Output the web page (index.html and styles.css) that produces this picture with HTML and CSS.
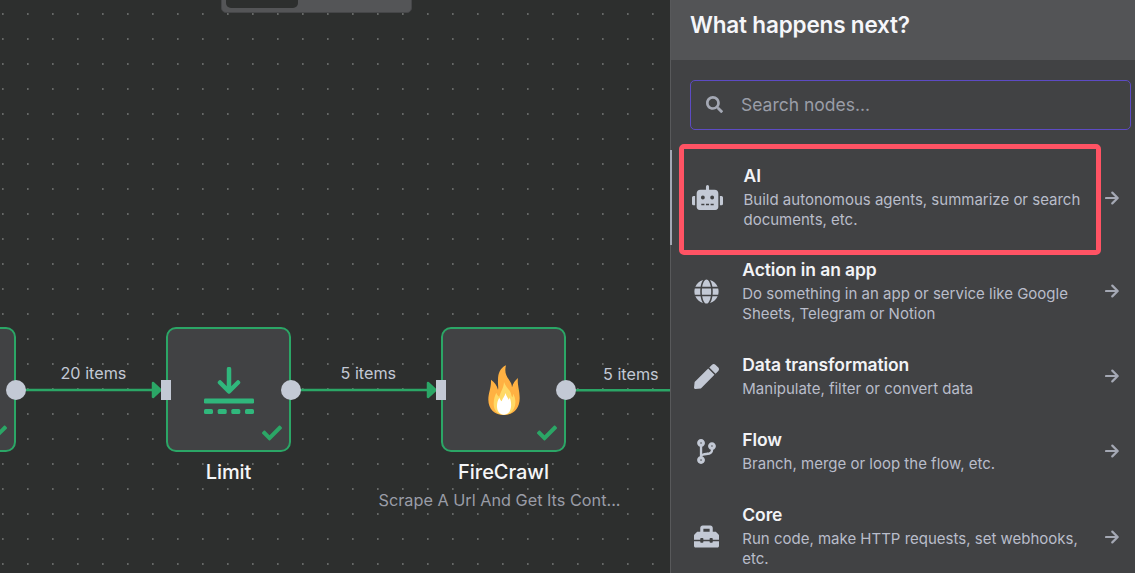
FILE: index.html
```html
<!DOCTYPE html>
<html lang="en">
<head>
<meta charset="utf-8">
<title>Workflow editor</title>
<link rel="stylesheet" href="styles.css">
</head>
<body>
<svg class="defs" aria-hidden="true">
  <symbol id="check" viewBox="0 0 512 512"><path d="M173.898 439.404l-166.4-166.4c-9.997-9.997-9.997-26.206 0-36.204l36.203-36.204c9.997-9.998 26.207-9.998 36.204 0L192 312.69 432.095 72.596c9.997-9.997 26.207-9.997 36.204 0l36.203 36.204c9.997 9.997 9.997 26.206 0 36.204l-294.4 294.401c-9.998 9.997-26.207 9.997-36.204-.001z"/></symbol>
  <symbol id="arrow" viewBox="0 0 14 14"><path d="M1 7H12.2M7.3 1.6L12.7 7L7.3 12.4" fill="none" stroke="currentColor" stroke-width="2.2" stroke-linecap="round" stroke-linejoin="round"/></symbol>
</svg>
<div class="app">
  <main class="canvas">
    <div class="tabs"><span class="tab-active"></span></div>

    <svg class="edges" width="670" height="573">
      <g class="edge">
        <path d="M16 390H155M291 390H430M566 390.3H670"/>
        <path class="head" d="M153 383L160.500 390L153 397ZM428 383L435.500 390L428 397Z"/>
      </g>
    </svg>
    <span class="edge-label label-a">20 items</span>
    <span class="edge-label label-b">5 items</span>
    <span class="edge-label label-c">5 items</span>

    <div class="node node-prev">
      <svg class="check"><use href="#check"/></svg>
      <i class="port-out"></i>
    </div>
    <div class="node node-limit">
      <svg class="limit-icon" viewBox="0 0 50 48">
        <path d="M25 2V24M16 15.500L25 24.500L34 15.500" fill="none" stroke="currentColor" stroke-width="4.500" stroke-linecap="round" stroke-linejoin="round"/>
        <rect x="0" y="31.500" width="50" height="5" rx="1.300"/>
        <rect x="0" y="42" width="9" height="5" rx="1.600"/>
        <rect x="13.700" y="42" width="9" height="5" rx="1.600"/>
        <rect x="27.300" y="42" width="9" height="5" rx="1.600"/>
        <rect x="41" y="42" width="9" height="5" rx="1.600"/>
      </svg>
      <svg class="check"><use href="#check"/></svg>
      <i class="port-in"></i><i class="port-out"></i>
    </div>
    <div class="node node-fire">
      <svg class="fire-icon" viewBox="204 150 96 150">
        <path fill="#ffb142" d="M258 151C253 170 258 182 266 193C272 202 276 209 276 217C279 205 285 196 294 189C291 208 299 224 299 250C299 280 281 300 252 300C224 300 205 282 205 254C205 232 214 220 213 194C223 201 231 211 234 224C236 216 233 209 234 195C234 174 241 159 258 151Z"/>
        <path fill="#ffd966" d="M252 201C256 216 272 225 274 240C275 244 276 246 277 247C279 244 279 240 279 236C284 244 287 254 286 264C285 285 271 299 252 299C232 299 221 285 221 266C221 252 225 241 229 233C231 239 234 243 238 245C242 229 251 220 252 201Z"/>
        <path fill="#fff" d="M257 234C258 243 263 247 266 254C268 251 269 250 269 247C273 258 274 266 273 276C271 290 264 299 252 299C239 299 231 289 231 274C231 264 233 256 238 248C240 253 242 256 245 259C248 249 254 244 257 234Z"/>
      </svg>
      <svg class="check"><use href="#check"/></svg>
      <i class="port-in"></i><i class="port-out"></i>
    </div>
    <div class="node-name name-limit">Limit</div>
    <div class="node-name name-fire">FireCrawl</div>
    <div class="node-sub">Scrape A Url And Get Its Cont...</div>
  </main>

  <aside class="panel">
    <header class="panel-header">What happens next?</header>
    <div class="search">
      <svg viewBox="0 0 512 512"><path d="M505 442.700L405.300 343c-4.500-4.500-10.600-7-17-7H372c27.600-35.300 44-79.700 44-128C416 93.100 322.900 0 208 0S0 93.100 0 208s93.100 208 208 208c48.300 0 92.700-16.400 128-44v16.300c0 6.400 2.500 12.500 7 17l99.700 99.700c9.400 9.400 24.600 9.400 33.900 0l28.300-28.300c9.400-9.400 9.400-24.600.1-34zM208 336c-70.700 0-128-57.200-128-128 0-70.700 57.200-128 128-128 70.700 0 128 57.200 128 128 0 70.700-57.200 128-128 128z"/></svg>
      <span>Search nodes...</span>
    </div>
    <section class="list">
      <div class="item selected">
        <div class="icon"><svg class="robot" viewBox="0 0 640 512"><path d="M32,224H64V416H32A32,32,0,0,1,0,384V256A32,32,0,0,1,32,224Zm512-48V448a64,64,0,0,1-64,64H160a64,64,0,0,1-64-64V176a80,80,0,0,1,80-80H288V32a32,32,0,0,1,64,0V96H464A80,80,0,0,1,544,176ZM264,256a40,40,0,1,0-40,40A40,40,0,0,0,264,256Zm-8,128H192v32h64Zm96,0H288v32h64ZM456,256a40,40,0,1,0-40,40A40,40,0,0,0,456,256Zm-8,128H384v32h64ZM640,256V384a32,32,0,0,1-32,32H576V224h32A32,32,0,0,1,640,256Z"/></svg></div>
        <div class="text"><h3>AI</h3><p>Build autonomous agents, summarize or search<br>documents, etc.</p></div>
        <svg class="arrow"><use href="#arrow"/></svg>
      </div>
      <div class="item double">
        <div class="icon"><svg viewBox="-8 0 512 512"><path d="M336.500 160C322 70.700 287.800 8 248 8s-74 62.700-88.500 152h177zM152 256c0 22.200 1.200 43.500 3.300 64h185.300c2.100-20.500 3.300-41.800 3.300-64s-1.200-43.500-3.300-64H155.300c-2.100 20.500-3.300 41.800-3.300 64zm324.700-96c-28.600-67.900-86.500-120.400-158-141.600 24.400 33.800 41.200 84.700 50 141.600h108zM177.200 18.400C105.800 39.600 47.800 92.100 19.300 160h108c8.700-56.900 25.500-107.800 49.900-141.600zM487.400 192H372.700c2.100 21 3.300 42.500 3.300 64s-1.200 43-3.300 64h114.600c5.500-20.500 8.600-41.800 8.600-64s-3.100-43.500-8.500-64zM120 256c0-21.500 1.200-43 3.300-64H8.600C3.200 212.500 0 233.800 0 256s3.200 43.500 8.600 64h114.600c-2-21-3.200-42.500-3.200-64zm39.500 96c14.500 89.300 48.700 152 88.500 152s74-62.700 88.500-152h-177zm159.300 141.600c71.400-21.200 129.400-73.700 158-141.600h-108c-8.800 56.900-25.600 107.800-50 141.600zM19.300 352c28.600 67.900 86.500 120.400 158 141.600-24.400-33.800-41.200-84.700-50-141.600h-108z"/></svg></div>
        <div class="text"><h3>Action in an app</h3><p>Do something in an app or service like Google<br>Sheets, Telegram or Notion</p></div>
        <svg class="arrow"><use href="#arrow"/></svg>
      </div>
      <div class="item">
        <div class="icon"><svg viewBox="0 0 512 512"><path d="M290.740 93.240l128.020 128.020-277.990 277.990-114.140 12.600C11.350 513.540-1.560 500.620.140 485.340l12.700-114.220 277.900-277.880zm207.200-19.060l-60.110-60.110c-18.750-18.750-49.160-18.750-67.910 0l-56.550 56.550 128.020 128.020 56.550-56.550c18.750-18.760 18.750-49.160 0-67.910z"/></svg></div>
        <div class="text"><h3>Data transformation</h3><p>Manipulate, filter or convert data</p></div>
        <svg class="arrow"><use href="#arrow"/></svg>
      </div>
      <div class="item">
        <div class="icon"><svg viewBox="-64 0 512 512"><path d="M384 144c0-44.200-35.800-80-80-80s-80 35.800-80 80c0 36.400 24.300 67.100 57.500 76.800-.6 16.100-4.200 28.500-11 36.900-15.400 19.200-49.300 22.400-85.200 25.700-28.200 2.600-57.400 5.400-81.300 16.900v-144c32.500-10.200 56-40.500 56-76.300 0-44.200-35.800-80-80-80S0 35.800 0 80c0 35.800 23.500 66.100 56 76.300v199.300C23.500 365.900 0 396.200 0 432c0 44.200 35.800 80 80 80s80-35.800 80-80c0-34-21.200-63.100-51.200-74.600 3.100-5.200 7.800-9.800 14.900-13.400 16.200-8.200 40.400-10.400 66.100-12.800 42.200-3.900 90-8.400 118.200-43.400 14-17.400 21.100-39.800 21.600-67.900 31.600-10.800 54.400-40.700 54.400-75.900zM80 64c8.800 0 16 7.200 16 16s-7.200 16-16 16-16-7.200-16-16 7.200-16 16-16zm0 384c-8.800 0-16-7.200-16-16s7.200-16 16-16 16 7.200 16 16-7.200 16-16 16zm224-320c8.800 0 16 7.200 16 16s-7.200 16-16 16-16-7.200-16-16 7.200-16 16-16z"/></svg></div>
        <div class="text"><h3>Flow</h3><p>Branch, merge or loop the flow, etc.</p></div>
        <svg class="arrow"><use href="#arrow"/></svg>
      </div>
      <div class="item double last">
        <div class="icon"><svg viewBox="0 0 512 512"><path d="M502.630 214.630l-45.250-45.250c-6-6-14.140-9.370-22.630-9.370H384V80c0-26.510-21.490-48-48-48H176c-26.510 0-48 21.490-48 48v80H77.250c-8.490 0-16.620 3.370-22.630 9.370L9.370 214.630c-6 6-9.370 14.140-9.370 22.630V320h128v-16c0-8.840 7.160-16 16-16h32c8.840 0 16 7.160 16 16v16h128v-16c0-8.840 7.160-16 16-16h32c8.840 0 16 7.160 16 16v16h128v-82.750c0-8.480-3.370-16.620-9.370-22.620zM320 160H192V96h128v64zm64 208c0 8.840-7.160 16-16 16h-32c-8.840 0-16-7.160-16-16v-16H192v16c0 8.840-7.160 16-16 16h-32c-8.840 0-16-7.160-16-16v-16H0v96c0 17.670 14.330 32 32 32h448c17.670 0 32-14.330 32-32v-96H384v16z"/></svg></div>
        <div class="text"><h3>Core</h3><p>Run code, make HTTP requests, set webhooks,<br>etc.</p></div>
        <svg class="arrow"><use href="#arrow"/></svg>
      </div>
    </section>
    <div class="highlight"></div>
  </aside>
</div>
</body>
</html>
```
FILE: styles.css
```css
* { box-sizing: border-box; }
body {
  margin: 0;
  background: #2d2f2e;
  font-family: Inter, "Liberation Sans", sans-serif;
  overflow: hidden;
}
.defs { display: none; }
.app { display: flex; width: 1135px; height: 573px; overflow: hidden; }

.canvas {
  position: relative;
  flex: 0 0 670px;
  overflow: hidden;
  background-color: #2d2f2e;
  background-image: radial-gradient(circle at 2.8px 14px, #666867 0.6px, transparent 1.3px);
  background-size: 25px 25px;
}
.tabs {
  position: absolute;
  left: 221px;
  top: -26px;
  width: 191px;
  height: 39px;
  padding: 4px;
  border: 1px solid #454648;
  border-radius: 5px;
  background: #545557;
}
.tab-active {
  display: block;
  width: 72px;
  height: 29px;
  border-radius: 5px;
  background: #2d2f2e;
}
.edges { position: absolute; left: 0; top: 0; }
.edge { fill: none; stroke: #2ba666; stroke-width: 2.5; }
.head { fill: #2ba666; stroke-width: 2.5; stroke-linejoin: round; }
.edge-label {
  position: absolute;
  color: #c3c9d5;
  font-size: 16.2px;
  line-height: 20px;
  white-space: nowrap;
}
.label-a { left: 60.5px; top: 363px; }
.label-b { left: 340.5px; top: 363px; }
.label-c { left: 603px; top: 364px; }

.node {
  position: absolute;
  top: 327px;
  width: 125px;
  height: 125px;
  border: 2px solid #2ba666;
  border-radius: 10px;
  background: #414244;
}
.node-prev { left: -109px; }
.node-limit { left: 166px; }
.node-fire { left: 441px; }
.check { position: absolute; right: 7px; bottom: 7px; width: 20px; height: 20px; fill: #2ba666; }
.port-in, .port-out { position: absolute; background: #c3c9d5; }
.port-in { left: -7px; top: 51px; width: 10px; height: 20px; }
.port-out { right: -12px; top: 51px; width: 20px; height: 20px; border-radius: 50%; }
.limit-icon { position: absolute; left: 36px; top: 38px; width: 50px; height: 48px; color: #30b77c; fill: #30b77c; }
.fire-icon { position: absolute; left: 45px; top: 36px; width: 32px; height: 50px; }
.node-name {
  position: absolute;
  top: 459px;
  width: 160px;
  color: #f5f6f8;
  font-size: 20px;
  font-weight: 500;
  line-height: 26px;
  letter-spacing: -0.05px;
  text-align: center;
}
.name-limit { left: 148.5px; }
.name-fire { left: 423.5px; }
.node-sub {
  position: absolute;
  left: 378.5px;
  top: 490px;
  color: #9a9da7;
  font-size: 16.25px;
  line-height: 21px;
  white-space: nowrap;
}

.panel {
  position: relative;
  flex: 0 0 465px;
  border-left: 1px solid #58595b;
  background: #414244;
}
.panel-header {
  height: 60px;
  padding: 11px 19px;
  background: #535456;
  color: #f5f6fa;
  font-size: 22.5px;
  font-weight: 600;
  line-height: 28px;
  letter-spacing: -0.18px;
}
.search {
  display: flex;
  align-items: center;
  gap: 18px;
  width: 441px;
  height: 50px;
  margin: 20px 0 20px 19px;
  padding: 0 0 2px 15px;
  border: 1px solid #5d4bc4;
  border-radius: 5px;
  color: #9a9da7;
  font-size: 17.5px;
}
.search svg { width: 17px; height: 17px; fill: #a4a8b4; }
.item {
  display: flex;
  align-items: center;
  height: 75px;
  padding-left: 20px;
}
.item.double { height: 94.5px; }
.item.last { height: 96px; }
.item.selected {
  height: 95px;
  margin: 0 0 -1px -1px;
  padding-left: 20px;
  border-left: 2px solid #a4a8b4;
}
.icon { display: flex; justify-content: center; flex: 0 0 30px; }
.icon svg { width: 25px; height: 25px; fill: #c3c9d5; }
.icon .robot { width: 31px; height: 25px; flex: none; }
.text { flex: 0 0 362px; padding-left: 21.3px; }
.selected .text { padding-left: 20.5px; }
.text h3 {
  margin: -1px 0 0;
  color: #f2f3f6;
  font-size: 17.5px;
  font-weight: 600;
  line-height: 24px;
  letter-spacing: -0.1px;
}
.text p {
  margin: 2px 0 0;
  color: #b9bdca;
  font-size: 15px;
  line-height: 20px;
  white-space: nowrap;
}
.arrow { flex: none; width: 14px; height: 14px; margin-left: 21.5px; color: #a4a8b4; }
.selected .arrow { margin-left: 20px; }
.highlight {
  position: absolute;
  left: 8px;
  top: 144px;
  width: 422px;
  height: 111px;
  border: 5px solid #ff5364;
  border-radius: 5px;
}
```
